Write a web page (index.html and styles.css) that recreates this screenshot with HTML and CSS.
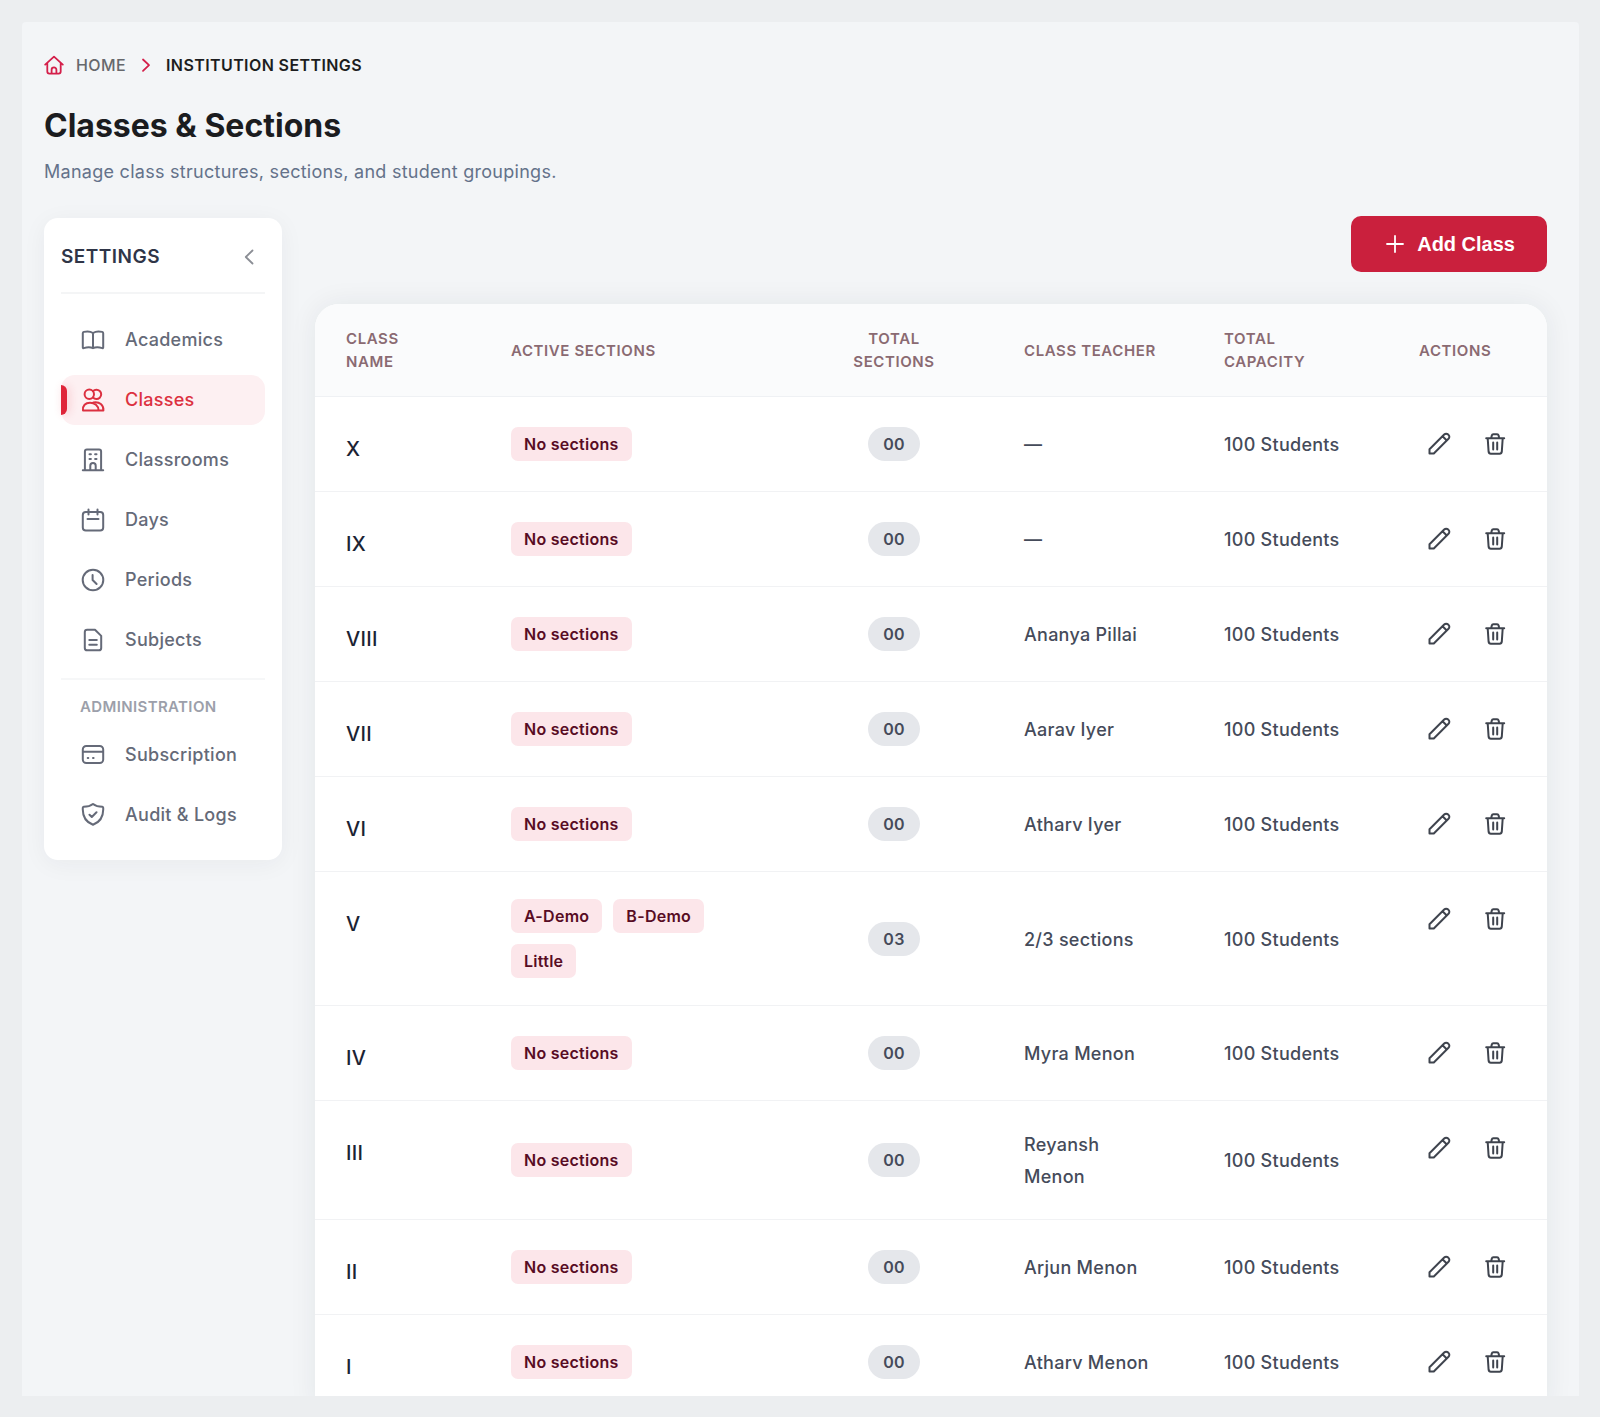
FILE: index.html
```html
<!DOCTYPE html>
<html lang="en">
<head>
<meta charset="utf-8">
<meta name="viewport" content="width=device-width, initial-scale=1">
<title>Classes &amp; Sections</title>
<link rel="stylesheet" href="styles.css">
</head>
<body>
<svg class="sprite" aria-hidden="true">
  <symbol id="i-home" viewBox="0 0 20 20"><path d="M1.2 9.6 10 1.6l8.800 8M3.300 8v8.600q0 2 2 2h9.400q2 0 2-2V8M7.600 18.400v-3.600a2.400 2.400 0 0 1 4.800 0v3.600"/></symbol>
  <symbol id="i-right" viewBox="0 0 20 20"><path d="m7 4.500 6 5.700-6 5.700"/></symbol>
  <symbol id="i-left" viewBox="0 0 20 20"><path d="m13.500 3.500-6.700 6.500 6.700 6.500"/></symbol>
  <symbol id="i-plus" viewBox="0 0 20 20"><path d="M10 2v16M2 10h16"/></symbol>
  <symbol id="i-book" viewBox="0 0 24 24"><path d="M12 5C9.500 3.300 5.500 3.200 2.800 3.900Q1.800 4.200 1.800 5.200V19.600Q1.800 20.400 2.700 20.100C5.500 19.300 9.500 19 12 20.200C14.500 19 18.500 19.300 21.300 20.100Q22.200 20.400 22.200 19.600V5.200Q22.200 4.200 21.200 3.900C18.500 3.200 14.500 3.300 12 5ZM12 5V20"/></symbol>
  <symbol id="i-users" viewBox="0 0 24 24"><circle cx="8.300" cy="6.300" r="4.700"/><path d="M12 3.200a4.700 4.700 0 1 1 0 6.300M2 22.500C1.400 17.500 4.500 14.800 9 14.800S17.500 17.500 17.600 22.500ZM12.500 14.500C18.500 13.500 22.800 17 22.400 22.500H17.600"/></symbol>
  <symbol id="i-building" viewBox="0 0 24 24"><path d="M1.800 22.200h20.400M3.900 22V3.500q0-2 2-2h12.200q2 0 2 2V22M9.300 22v-4.300a2.700 2.700 0 0 1 5.400 0V22M8.500 6.300h1.400M14.100 6.300h1.400M8.500 11h1.400M14.100 11h1.400"/></symbol>
  <symbol id="i-calendar" viewBox="0 0 24 24"><rect x="1.800" y="4" width="20.400" height="18.500" rx="3"/><path d="M7.500 1.500v5M16.500 1.500v5M6.500 11h11"/></symbol>
  <symbol id="i-clock" viewBox="0 0 24 24"><circle cx="12" cy="12" r="10.300"/><path d="M11.600 7v5l4 4"/></symbol>
  <symbol id="i-file" viewBox="0 0 24 24"><path d="M6.200 1.700h7.800l6.200 6.200v12q0 2.400-2.400 2.400H6.200q-2.400 0-2.400-2.400v-15.800q0-2.400 2.400-2.400ZM8.300 12h7.500M8.300 16.700h7.500"/></symbol>
  <symbol id="i-card" viewBox="0 0 24 24"><rect x="1.800" y="3" width="20.400" height="17" rx="3.500"/><path d="M2 8.700h20M6.700 15h.6M12 15h.6"/></symbol>
  <symbol id="i-shield" viewBox="0 0 24 24"><path d="M12 1C9 3.400 5.500 3.800 2.600 3.800Q1.800 3.900 1.800 4.900C1.400 12.400 4.500 18.900 12 21.800C19.500 18.900 22.600 12.400 22.200 4.900Q22.200 3.900 21.400 3.800C18.500 3.800 15 3.400 12 1ZM8.500 11.700l2.300 2.300 4.700-4.700"/></symbol>
  <symbol id="i-pencil" viewBox="0 0 24 24"><path d="M2.500 21.500V17.200L17.200 2.500a2.700 2.700 0 0 1 3.900 0l.400.400a2.700 2.700 0 0 1 0 3.900L6.800 21.500ZM15.500 4.200 19.800 8.500"/></symbol>
  <symbol id="i-trash" viewBox="0 0 24 24"><path d="M3.200 6.300h18M4.700 6.300l.9 13.400q.2 2 2.200 2h8.800q2 0 2.200-2L19.700 6.300M8.200 6l.6-2.500q.3-1.200 1.500-1.200h3.800q1.200 0 1.500 1.200L16.200 6M10.200 10.500v7M14.200 10.500v7"/></symbol>
</svg>

<div class="frame">
  <header class="page-head">
    <nav class="crumbs" aria-label="Breadcrumb">
      <a class="crumb" href="#"><svg class="icon icon-s brand"><use href="#i-home"/></svg>HOME</a>
      <svg class="icon icon-s brand"><use href="#i-right"/></svg>
      <span class="crumb-current" aria-current="page">INSTITUTION SETTINGS</span>
    </nav>
    <h1 class="title">Classes &amp; Sections</h1>
    <p class="subtitle">Manage class structures, sections, and student groupings.</p>
  </header>

  <div class="layout">
    <aside class="sidebar">
      <div class="side-head">
        <h2 class="side-title">SETTINGS</h2>
        <button class="collapse" type="button" aria-label="Collapse settings"><svg class="icon icon-s"><use href="#i-left"/></svg></button>
      </div>
      <nav class="side-nav" aria-label="Settings">
        <a class="side-link" href="#"><svg class="icon"><use href="#i-book"/></svg>Academics</a>
        <a class="side-link is-active" href="#" aria-current="page"><svg class="icon"><use href="#i-users"/></svg>Classes</a>
        <a class="side-link" href="#"><svg class="icon"><use href="#i-building"/></svg>Classrooms</a>
        <a class="side-link" href="#"><svg class="icon"><use href="#i-calendar"/></svg>Days</a>
        <a class="side-link" href="#"><svg class="icon"><use href="#i-clock"/></svg>Periods</a>
        <a class="side-link" href="#"><svg class="icon"><use href="#i-file"/></svg>Subjects</a>
      </nav>
      <h3 class="side-group">ADMINISTRATION</h3>
      <nav class="side-nav" aria-label="Administration">
        <a class="side-link" href="#"><svg class="icon"><use href="#i-card"/></svg>Subscription</a>
        <a class="side-link" href="#"><svg class="icon"><use href="#i-shield"/></svg>Audit &amp; Logs</a>
      </nav>
    </aside>

    <main class="content">
      <button class="add" type="button"><svg class="icon icon-s"><use href="#i-plus"/></svg>Add Class</button>
      <div class="card">
        <table class="classes">
          <colgroup><col class="c-name"><col><col class="c-total"><col class="c-teacher"><col class="c-capacity"><col class="c-actions"></colgroup>
          <thead>
            <tr><th scope="col">CLASS<br>NAME</th><th scope="col">ACTIVE SECTIONS</th><th scope="col" class="center">TOTAL<br>SECTIONS</th><th scope="col">CLASS TEACHER</th><th scope="col">TOTAL<br>CAPACITY</th><th scope="col">ACTIONS</th></tr>
          </thead>
          <tbody>
            <tr><td class="name">X</td><td><div class="chips"><span class="chip">No sections</span></div></td><td class="center"><span class="pill">00</span></td><td class="text">—</td><td class="text">100 Students</td><td class="top"><div class="actions"><button class="act" type="button" aria-label="Edit"><svg class="icon"><use href="#i-pencil"/></svg></button><button class="act" type="button" aria-label="Delete"><svg class="icon"><use href="#i-trash"/></svg></button></div></td></tr>
            <tr><td class="name">IX</td><td><div class="chips"><span class="chip">No sections</span></div></td><td class="center"><span class="pill">00</span></td><td class="text">—</td><td class="text">100 Students</td><td class="top"><div class="actions"><button class="act" type="button" aria-label="Edit"><svg class="icon"><use href="#i-pencil"/></svg></button><button class="act" type="button" aria-label="Delete"><svg class="icon"><use href="#i-trash"/></svg></button></div></td></tr>
            <tr><td class="name">VIII</td><td><div class="chips"><span class="chip">No sections</span></div></td><td class="center"><span class="pill">00</span></td><td class="text">Ananya Pillai</td><td class="text">100 Students</td><td class="top"><div class="actions"><button class="act" type="button" aria-label="Edit"><svg class="icon"><use href="#i-pencil"/></svg></button><button class="act" type="button" aria-label="Delete"><svg class="icon"><use href="#i-trash"/></svg></button></div></td></tr>
            <tr><td class="name">VII</td><td><div class="chips"><span class="chip">No sections</span></div></td><td class="center"><span class="pill">00</span></td><td class="text">Aarav Iyer</td><td class="text">100 Students</td><td class="top"><div class="actions"><button class="act" type="button" aria-label="Edit"><svg class="icon"><use href="#i-pencil"/></svg></button><button class="act" type="button" aria-label="Delete"><svg class="icon"><use href="#i-trash"/></svg></button></div></td></tr>
            <tr><td class="name">VI</td><td><div class="chips"><span class="chip">No sections</span></div></td><td class="center"><span class="pill">00</span></td><td class="text">Atharv Iyer</td><td class="text">100 Students</td><td class="top"><div class="actions"><button class="act" type="button" aria-label="Edit"><svg class="icon"><use href="#i-pencil"/></svg></button><button class="act" type="button" aria-label="Delete"><svg class="icon"><use href="#i-trash"/></svg></button></div></td></tr>
            <tr><td class="name">V</td><td><div class="chips"><span class="chip">A-Demo</span><span class="chip">B-Demo</span><span class="chip">Little</span></div></td><td class="center"><span class="pill">03</span></td><td class="text">2/3 sections</td><td class="text">100 Students</td><td class="top"><div class="actions"><button class="act" type="button" aria-label="Edit"><svg class="icon"><use href="#i-pencil"/></svg></button><button class="act" type="button" aria-label="Delete"><svg class="icon"><use href="#i-trash"/></svg></button></div></td></tr>
            <tr><td class="name">IV</td><td><div class="chips"><span class="chip">No sections</span></div></td><td class="center"><span class="pill">00</span></td><td class="text">Myra Menon</td><td class="text">100 Students</td><td class="top"><div class="actions"><button class="act" type="button" aria-label="Edit"><svg class="icon"><use href="#i-pencil"/></svg></button><button class="act" type="button" aria-label="Delete"><svg class="icon"><use href="#i-trash"/></svg></button></div></td></tr>
            <tr><td class="name">III</td><td><div class="chips"><span class="chip">No sections</span></div></td><td class="center"><span class="pill">00</span></td><td class="text">Reyansh Menon</td><td class="text">100 Students</td><td class="top"><div class="actions"><button class="act" type="button" aria-label="Edit"><svg class="icon"><use href="#i-pencil"/></svg></button><button class="act" type="button" aria-label="Delete"><svg class="icon"><use href="#i-trash"/></svg></button></div></td></tr>
            <tr><td class="name">II</td><td><div class="chips"><span class="chip">No sections</span></div></td><td class="center"><span class="pill">00</span></td><td class="text">Arjun Menon</td><td class="text">100 Students</td><td class="top"><div class="actions"><button class="act" type="button" aria-label="Edit"><svg class="icon"><use href="#i-pencil"/></svg></button><button class="act" type="button" aria-label="Delete"><svg class="icon"><use href="#i-trash"/></svg></button></div></td></tr>
            <tr><td class="name">I</td><td><div class="chips"><span class="chip">No sections</span></div></td><td class="center"><span class="pill">00</span></td><td class="text">Atharv Menon</td><td class="text">100 Students</td><td class="top"><div class="actions"><button class="act" type="button" aria-label="Edit"><svg class="icon"><use href="#i-pencil"/></svg></button><button class="act" type="button" aria-label="Delete"><svg class="icon"><use href="#i-trash"/></svg></button></div></td></tr>
          </tbody>
        </table>
      </div>
    </main>
  </div>
</div>
</body>
</html>
```
FILE: styles.css
```css
*, *::before, *::after { box-sizing: border-box; }

body {
  margin: 0;
  height: 100vh;
  padding: 22px 21px 21px 22px;
  background: #eceef0;
  color: #454b5a;
  font: 500 18px/32px Inter, "Liberation Sans", sans-serif;
  letter-spacing: 0.015em;
}

.sprite { display: none; }

.frame {
  height: 100%;
  padding: 28px 32px 0 22px;
  overflow: hidden;
  background: #f3f5f7;
  border-radius: 4px 4px 0 0;
}

h1, h2, h3, p { margin: 0; }
a { color: inherit; text-decoration: none; }

button {
  border: 0;
  padding: 0;
  background: none;
  color: inherit;
  font: inherit;
  cursor: pointer;
}

.icon {
  display: block;
  flex: none;
  width: 24px;
  height: 24px;
  fill: none;
  stroke: currentColor;
  stroke-width: 2;
  stroke-linecap: round;
  stroke-linejoin: round;
}
.icon-s { width: 20px; height: 20px; stroke-width: 1.8; }
.brand { color: #d41f4a; }

/* Page header */
.crumbs {
  display: flex;
  align-items: center;
  gap: 10px;
  font-size: 16px;
  line-height: 30px;
  letter-spacing: 0.025em;
}
.crumb { display: flex; align-items: center; gap: 12px; color: #66686c; }
.crumb-current { color: #1c1d20; font-weight: 600; }
.title {
  margin-top: 26px;
  color: #1b1c1f;
  font-size: 32px;
  line-height: 40px;
  font-weight: 700;
  letter-spacing: 0;
}
.subtitle {
  margin-top: 10px;
  color: #64728a;
  font-weight: 400;
}

.layout { display: flex; align-items: flex-start; gap: 33px; margin-top: 28px; }

/* Settings sidebar */
.sidebar {
  flex: none;
  width: 238px;
  margin-top: 2px;
  padding: 16px 17px 20px;
  background: #fff;
  border-radius: 14px;
  box-shadow: 0 4px 24px rgba(30, 40, 50, 0.05);
}
.side-head {
  display: flex;
  align-items: center;
  justify-content: space-between;
  height: 60px;
  padding-bottom: 12px;
  border-bottom: 2px solid #f4f5f6;
}
.side-title { color: #2f3547; font-size: 19px; font-weight: 600; letter-spacing: 0.025em; }
.collapse { padding: 6px; color: #8b8e95; }
.side-nav { display: grid; gap: 10px; }
.side-head + .side-nav { padding: 21px 0 13px; border-bottom: 2px solid #f6f7f8; }
.side-link {
  position: relative;
  display: flex;
  align-items: center;
  gap: 20px;
  height: 50px;
  padding-left: 20px;
  border-radius: 14px;
  color: #656a78;
}
.is-active { background: #fdf0f2; color: #dc3040; }
.is-active::before {
  content: "";
  position: absolute;
  left: 0;
  top: 10px;
  width: 6px;
  height: 30px;
  border-radius: 0 6px 6px 0;
  background: #df2539;
  box-shadow: 2px 0 10px rgba(223, 37, 57, 0.2);
}
.side-group {
  padding: 16px 19px 12px;
  color: #9c9faa;
  font-size: 15px;
  line-height: 22px;
  font-weight: 600;
  letter-spacing: 0.025em;
}

/* Content */
.content { flex: 1; min-width: 0; display: grid; gap: 32px; }
.add {
  justify-self: end;
  display: flex;
  align-items: center;
  gap: 12px;
  height: 56px;
  padding: 0 32px 0 34px;
  border-radius: 10px;
  background: #ca203d;
  color: #fff;
  font-family: "Liberation Sans", Arial, sans-serif;
  font-size: 20px;
  font-weight: 700;
  letter-spacing: 0;
}
.card {
  overflow: hidden;
  background: #fff;
  border-radius: 24px 24px 0 0;
  box-shadow: 0 0 28px rgba(30, 40, 50, 0.07);
}
.classes { width: 100%; table-layout: fixed; border-collapse: separate; border-spacing: 0; }
.c-name { width: 165px; }
.c-total { width: 198px; }
.c-teacher { width: 200px; }
.c-capacity { width: 195px; }
.c-actions { width: 159px; }

th {
  padding: 23px 31px;
  background: #fafbfc;
  border-bottom: 1px solid #eff1f4;
  color: #8a6a72;
  font-size: 15px;
  line-height: 23px;
  font-weight: 600;
  letter-spacing: 0.04em;
  text-align: left;
}
td { padding: 27px 31px; border-bottom: 1px solid #f1f2f4; vertical-align: middle; }
.center { text-align: center; }
td.name { padding-top: 36px; padding-bottom: 20px; color: #1b2334; font-size: 20px; vertical-align: top; }
td.text { padding-top: 28px; padding-bottom: 26px; }
td.top { vertical-align: top; }
.chips { display: flex; flex-wrap: wrap; gap: 11px; }
.chip {
  padding: 0 13px;
  border-radius: 7px;
  background: #fce6ea;
  color: #580c24;
  font-size: 16px;
  line-height: 34px;
  font-weight: 600;
}
.pill {
  display: inline-block;
  padding: 0 15px;
  border-radius: 17px;
  background: #e5e7eb;
  font-size: 16px;
  line-height: 34px;
  font-weight: 600;
  vertical-align: middle;
}
.actions { display: flex; gap: 16px; }
.act {
  display: grid;
  place-items: center;
  width: 40px;
  height: 40px;
  color: #3f444e;
}
```
